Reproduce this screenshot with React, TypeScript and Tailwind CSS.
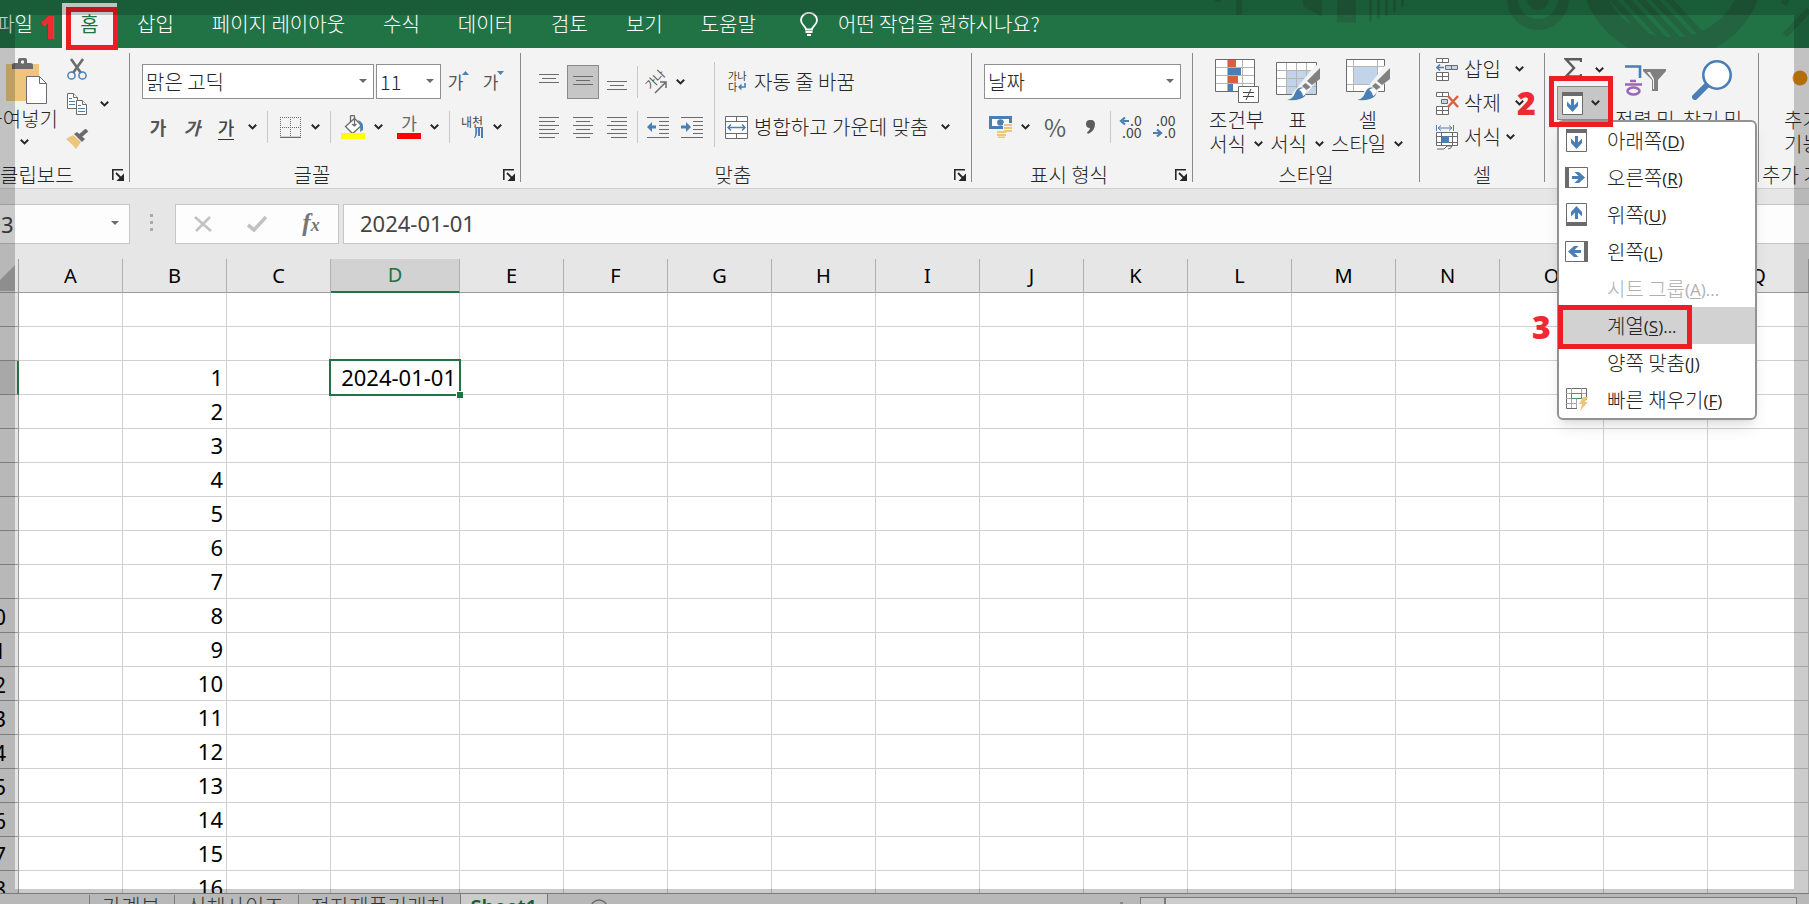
import React from 'react';

const BLUE = '#4a7fb5';
const GRAY = '#6b6b6b';

const columns = ['A', 'B', 'C', 'D', 'E', 'F', 'G', 'H', 'I', 'J', 'K', 'L', 'M', 'N', 'O', 'P', 'Q'];
const rows = Array.from({ length: 18 }, (_, i) => i + 1);
const tabs = ['삽입', '페이지 레이아웃', '수식', '데이터', '검토', '보기', '도움말'];
const sheets = ['가계부', '신체사이즈', '전자제품거래처'];

interface ChildrenProps {
  children: React.ReactNode;
}

const Chevron = () => (
  <svg className="w-[9px] h-[6px] shrink-0" viewBox="0 0 9 6" fill="none" stroke="#262626" strokeWidth="2">
    <path d="M0.8 0.8 4.5 4.4 8.2 0.8" />
  </svg>
);

const ChevronButton = ({ label }: { label: string }) => (
  <button aria-label={label} className="w-[18px] h-8 shrink-0 flex items-center justify-center">
    <Chevron />
  </button>
);

const IconButton = ({ label, className = 'w-[34px]', children }: ChildrenProps & { label: string; className?: string }) => (
  <button aria-label={label} className={`${className} h-8 shrink-0 flex items-center justify-center`}>
    {children}
  </button>
);

const Separator = ({ className = 'h-8 mx-[6px]' }: { className?: string }) => (
  <div className={`w-px shrink-0 bg-[#c8c8c8] ${className}`}></div>
);

const Divider = () => <div className="w-px h-[129px] shrink-0 bg-[#8a8a8a]"></div>;

const Launcher = ({ label }: { label: string }) => (
  <button aria-label={label} className="ml-[9px] mr-[5px] w-3 h-3 shrink-0">
    <svg viewBox="0 0 12 12" fill="none" stroke="#262626">
      <path d="M0.8 11V0.8H11" strokeWidth="1.6" />
      <path d="M4 4l5 5" strokeWidth="1.8" />
      <path d="M12 4.5V12H4.5z" fill="#262626" stroke="none" />
    </svg>
  </button>
);

interface GroupProps extends ChildrenProps {
  title: string;
  launcher?: boolean;
  className: string;
  align?: string;
}

const Group = ({ title, launcher, className, align = 'text-center', children }: GroupProps) => (
  <section className={`h-[132px] shrink-0 flex flex-col justify-between ${className}`}>
    {children}
    <div className="h-5 flex items-center">
      <span className={`flex-1 leading-5 whitespace-nowrap ${align}`}>{title}</span>
      {launcher && <Launcher label={`${title} 설정`} />}
    </div>
  </section>
);

interface ComboProps {
  label: string;
  value: string;
  className: string;
}

const Combo = ({ label, value, className }: ComboProps) => (
  <div className={`relative h-[35px] shrink-0 ${className}`}>
    <select aria-label={label} className="appearance-none w-full h-full pl-[3px] bg-white border border-[#8f8f8f] text-[#262626]">
      <option>{value}</option>
    </select>
    <svg className="absolute right-[7px] top-[15px] w-2 h-1" viewBox="0 0 8 4">
      <path d="M0 0h8L4 4z" fill={GRAY} />
    </svg>
  </div>
);

// each span is the start and end x of one horizontal line
const Lines = ({ top, gap, spans, children }: { top: number; gap: number; spans: number[][]; children?: React.ReactNode }) => (
  <svg className="w-[22px] h-[22px]" viewBox="0 0 22 22">
    {spans.map(([from, to], i) => (
      <rect key={i} x={from} y={top + i * gap} width={to - from} height="1" fill={GRAY} />
    ))}
    {children}
  </svg>
);

const HeaderArt = () => (
  <svg className="absolute right-0 top-0 w-[609px] h-12" viewBox="0 0 609 48">
    <defs>
      <clipPath id="disc">
        <circle cx="472" cy="-34" r="72" />
      </clipPath>
    </defs>
    <g fill="#23633f">
      <path d="M15 0h6v2h-6zM36 0h6v15h-6zM103 0h19v17l-19-11zM137 0h19v23l-19-1z" />
      <path d="M169 0h3v21l-3 1zM177 0h3v18l-3 1zM185 0h3v15l-3 1zM193 0h3v11l-3 2zM201 0h3v6l-3 2z" />
      <circle cx="338" cy="-1" r="11" />
    </g>
    <g fill="none" stroke="#23633f">
      <circle cx="338" cy="-1" r="25.5" strokeWidth="11" />
      <circle cx="472" cy="-34" r="82" strokeWidth="21" />
      <path d="M585 35l24-25M582 0l6 3" strokeWidth="6" />
      <g clipPath="url(#disc)" strokeWidth="6">
        <path d="M404-10l56 60M418-10l56 60M432-10l56 60M446-10l56 60M460-10l56 60" />
      </g>
    </g>
  </svg>
);

const Mark = ({ className, children }: ChildrenProps & { className: string }) => (
  <span className={`absolute z-30 text-[32px] leading-9 font-black text-[#ee2b33] font-['Open_Sans','Noto_Sans',sans-serif] ${className}`}>
    {children}
  </span>
);

const Header = () => (
  <header className="relative z-20 h-12 shrink-0 bg-[#217346] text-white">
    <HeaderArt />
    <nav className="relative flex h-12 whitespace-nowrap">
      <button className="w-[62px] pr-[29px] flex justify-end items-center">파일</button>
      <div className="relative w-[55px] mt-[3px] shrink-0 bg-[#f3f3f3]">
        <button className="w-full h-[42px] font-normal text-[#217346]">홈</button>
        <Mark className="-left-[23px] top-[6px]">1</Mark>
        <div className="absolute left-1 top-1 w-[52px] h-[43px] border-[5px] border-[#ee1c25]"></div>
      </div>
      <div className="flex pl-px">
        {tabs.map((tab) => (
          <button key={tab} className="px-[19px] h-12">
            {tab}
          </button>
        ))}
      </div>
      <button className="flex items-center gap-5 pl-[25px]">
        <svg className="w-[18px] h-6" viewBox="0 0 18 24" fill="none" stroke="#fff" strokeWidth="1.8">
          <path d="M6 17.500c0-3-5-4.500-5-9.200a8 7.500 0 0 1 16 0c0 4.700-5 6.200-5 9.200z" />
          <path d="M5.500 20h7M7 23h4" />
        </svg>
        어떤 작업을 원하시나요?
      </button>
    </nav>
  </header>
);

const ClipboardGroup = () => (
  <Group title="클립보드" launcher align="text-left" className="w-[129px]">
    <div className="flex">
      <button className="w-14 -ml-2 pt-[5px] flex flex-col items-end whitespace-nowrap">
        <svg className="w-[42px] h-[46px]" viewBox="0 0 42 46">
          <path d="M0 6h33v37H0z" fill="#edc67c" />
          <path d="M6 11V7q0-2 3-2h3V2q0-2 2-2h5q2 0 2 2v3h3q3 0 3 2v4z" fill={GRAY} />
          <circle cx="16.500" cy="4" r="1.700" fill="#f3f3f3" />
          <path d="M20.500 18.500h13l7 7v20h-20z" fill="#fff" stroke={GRAY} />
          <path d="M33.500 18.500v7h7" fill="none" stroke={GRAY} />
        </svg>
        <span className="h-6 -mr-[10px] leading-6 pt-[3px]">붙여넣기</span>
        <span className="h-6 w-12 pt-[4px] flex items-center justify-center">
          <Chevron />
        </span>
      </button>
      <div className="flex flex-col pl-[14px]">
        <IconButton label="잘라내기" className="w-[30px]">
          <svg className="w-5 h-[22px]" viewBox="0 0 20 22" fill="none">
            <path d="M4 1l10 14M16 1L6 15" stroke={GRAY} strokeWidth="2.600" />
            <circle cx="4.500" cy="17.500" r="3.600" stroke={BLUE} strokeWidth="1.500" />
            <circle cx="15.500" cy="17.500" r="3.600" stroke={BLUE} strokeWidth="1.500" />
          </svg>
        </IconButton>
        <div className="flex gap-[3px] mt-[3px]">
          <IconButton label="복사" className="w-[30px]">
            <svg className="w-[22px] h-[22px]" viewBox="0 0 22 22" fill="#fff" stroke={GRAY}>
              <path d="M1.500 0.500h6l4 4v11h-10z" />
              <path d="M7.500 0.500v4h4" />
              <path d="M3 5.500h3M3 8.500h6M3 11.500h6" stroke={BLUE} />
              <path d="M10.500 7.500h6l4 4v10h-10z" />
              <path d="M16.500 7.500v4h4" />
              <path d="M12 12.500h3M12 15.500h7M12 18.500h7" stroke={BLUE} />
            </svg>
          </IconButton>
          <ChevronButton label="복사 옵션" />
        </div>
        <IconButton label="서식 복사" className="w-[30px] mt-[3px]">
          <svg className="w-[23px] h-[20px]" viewBox="0 0 23 20">
            <path d="M0 10l7-4 8 7-5 7Q5 14 0 10z" fill="#edc67c" />
            <path d="M8 5l3-2 8 7-3 3z" fill={GRAY} />
            <path d="M14 7l7-6" stroke={GRAY} strokeWidth="4" />
          </svg>
        </IconButton>
      </div>
    </div>
  </Group>
);

const FontGroup = () => (
  <Group title="글꼴" launcher className="w-[390px]">
    <div className="pt-[11px] pl-[11px]">
      <div className="flex pl-px">
        <Combo label="글꼴" value="맑은 고딕" className="w-[232px] mr-[2px]" />
        <Combo label="글꼴 크기" value="11" className="w-[65px]" />
        <button aria-label="글꼴 크기 크게" className="w-[35px] flex items-center justify-center text-[17px] font-normal text-[#555]">
          가
          <svg className="w-[7px] h-[22px] -ml-[1px]" viewBox="0 0 7 22">
            <path d="M0 4h7L3.500 0z" fill={BLUE} />
          </svg>
        </button>
        <button aria-label="글꼴 크기 작게" className="w-[35px] flex items-center justify-center text-[17px] font-normal text-[#555]">
          가
          <svg className="w-[7px] h-[22px] -ml-[1px]" viewBox="0 0 7 22">
            <path d="M0 0h7L3.500 4z" fill={BLUE} />
          </svg>
        </button>
      </div>
      <div className="flex mt-3">
        <IconButton label="굵게">
          <b className="text-lg font-bold text-[#555]">가</b>
        </IconButton>
        <IconButton label="기울임꼴">
          <i className="text-lg font-bold text-[#555]">가</i>
        </IconButton>
        <IconButton label="밑줄">
          <span className="text-lg leading-6 border-b border-[#333] font-medium text-[#444]">가</span>
        </IconButton>
        <ChevronButton label="밑줄 옵션" />
        <Separator />
        <IconButton label="테두리" className="w-8">
          <svg className="w-[21px] h-[21px]" viewBox="0 0 21 21" fill="none" stroke={GRAY}>
            <path d="M0 0.500h21M0 10.500h21M0.500 0v20M10.500 0v20M20.500 0v20" strokeDasharray="1 1" />
            <path d="M0 20.500h21" strokeWidth="1.500" />
          </svg>
        </IconButton>
        <ChevronButton label="테두리 옵션" />
        <Separator />
        <IconButton label="채우기 색" className="w-8">
          <svg className="w-6 h-6" viewBox="0 0 24 24">
            <path d="M4.500 11.500l9-8 7 7-9 8z" fill="#fff" stroke={GRAY} strokeWidth="1.300" />
            <path d="M9.500 7V1.500q0-1 1-1h2q1 0 1 1V10M11 9l2.500 2 2-2" fill="none" stroke={GRAY} strokeWidth="1.300" />
            <path d="M17 5q6 2 5 10l-3 2q1-6-2-12z" fill={BLUE} />
            <rect y="18" width="24" height="6" fill="#ff0" />
          </svg>
        </IconButton>
        <ChevronButton label="채우기 색 옵션" />
        <IconButton label="글꼴 색" className="w-8 ml-[6px]">
          <span className="w-6 h-6 border-b-[6px] border-[#f00] text-[17px] leading-[16px] font-normal text-[#666]">가</span>
        </IconButton>
        <ChevronButton label="글꼴 색 옵션" />
        <Separator />
        <IconButton label="윗주" className="w-8">
          <span className="w-[22px] h-[22px] flex flex-col items-end text-xs leading-[11px] font-normal text-[#444] whitespace-nowrap">
            내천
            <svg className="w-[9px] h-[11px]" viewBox="0 0 9 11">
              <path d="M0 11q2-3 1-11h2q1 8-2 11zM4 0h2v9H4zM7 0h2v11H7z" fill={BLUE} />
            </svg>
          </span>
        </IconButton>
        <ChevronButton label="윗주 옵션" />
      </div>
    </div>
  </Group>
);

const AlignGroup = () => (
  <Group title="맞춤" launcher className="w-[450px]">
    <div className="flex">
      <div className="pt-[11px] pl-[11px] w-[188px]">
        <div className="flex items-center h-[35px]">
          <IconButton label="위쪽 맞춤">
            <Lines top={3} gap={4} spans={[[1, 21], [4, 18], [1, 21]]} />
          </IconButton>
          <button aria-label="가운데 맞춤" className="w-8 h-[34px] mx-px shrink-0 flex items-center justify-center bg-[#c6c6c6] border border-[#8a8a8a]">
            <Lines top={5} gap={4} spans={[[1, 21], [4, 18], [1, 21]]} />
          </button>
          <IconButton label="아래쪽 맞춤">
            <Lines top={10} gap={4} spans={[[1, 21], [4, 18], [1, 21]]} />
          </IconButton>
          <Separator className="h-8 mx-[3px]" />
          <IconButton label="방향" className="w-[30px]">
            <span className="relative w-6 h-6">
              <span className="absolute left-0 top-1 w-5 text-[12px] leading-3 font-normal text-[#555] whitespace-nowrap -rotate-45">가나</span>
              <svg className="absolute inset-0 w-6 h-6" viewBox="0 0 24 24" fill="none" stroke={GRAY} strokeWidth="1.500">
                <path d="M11 23L22 12M16 12h6v6" />
              </svg>
            </span>
          </IconButton>
          <ChevronButton label="방향 옵션" />
        </div>
        <div className="flex mt-3">
          <IconButton label="왼쪽 맞춤">
            <Lines top={1} gap={4} spans={[[1, 21], [1, 17], [1, 21], [1, 17], [1, 21], [1, 17]]} />
          </IconButton>
          <IconButton label="가로 가운데 맞춤">
            <Lines top={1} gap={4} spans={[[1, 21], [4, 18], [1, 21], [4, 18], [1, 21], [4, 18]]} />
          </IconButton>
          <IconButton label="오른쪽 맞춤">
            <Lines top={1} gap={4} spans={[[1, 21], [5, 21], [1, 21], [5, 21], [1, 21], [5, 21]]} />
          </IconButton>
          <Separator className="h-8 mx-[3px]" />
          <IconButton label="내어쓰기">
            <Lines top={1} gap={4} spans={[[0, 22], [12, 22], [12, 22], [12, 22], [12, 22], [0, 22]]}>
              <path d="M0 11l5-5v3.500h4v3H5V16z" fill={BLUE} />
            </Lines>
          </IconButton>
          <IconButton label="들여쓰기">
            <Lines top={1} gap={4} spans={[[0, 22], [12, 22], [12, 22], [12, 22], [12, 22], [0, 22]]}>
              <path d="M10 11L5 6v3.500H0v3h5V16z" fill={BLUE} />
            </Lines>
          </IconButton>
        </div>
      </div>
      <Separator className="h-[85px] mt-[9px] ml-[5px] mr-[10px]" />
      <div className="pt-[11px] whitespace-nowrap">
        <button className="h-[35px] flex items-center gap-[6px]">
          <svg className="w-[23px] h-[21px] font-normal" viewBox="0 0 23 21">
            <text x="3" y="9" fontSize="10" fill="#333">가나</text>
            <text x="3" y="20" fontSize="10" fill="#333">다</text>
            <path d="M20 12v4h-4" fill="none" stroke={BLUE} strokeWidth="1.600" />
            <path d="M13 16l3.500-3.500v7z" fill={BLUE} />
          </svg>
          자동 줄 바꿈
        </button>
        <div className="flex mt-3">
          <button className="h-8 flex items-center gap-[6px]">
            <svg className="w-[23px] h-[23px]" viewBox="0 0 23 23" fill="#fff" stroke={GRAY}>
              <path d="M0.500 0.500h22v22h-22zM0.500 5.500h22M0.500 17.500h22M11.500 0.500v5M11.500 17.500v5" />
              <path d="M3 11.500h17M6 8.500l-3 3 3 3M17 8.500l3 3-3 3" stroke={BLUE} strokeWidth="1.500" />
            </svg>
            병합하고 가운데 맞춤
          </button>
          <div className="pl-2 flex">
            <ChevronButton label="병합 옵션" />
          </div>
        </div>
      </div>
    </div>
  </Group>
);

const NumberGroup = () => (
  <Group title="표시 형식" launcher className="w-[220px]">
    <div className="pt-[11px] pl-3">
      <Combo label="표시 형식" value="날짜" className="w-[197px]" />
      <div className="flex mt-3">
        <IconButton label="회계 표시 형식" className="w-8">
          <svg className="w-[23px] h-[22px]" viewBox="0 0 23 22">
            <path d="M0 0h23v13H0z" fill={BLUE} />
            <path d="M3 3h17v7H3z" fill="#fff" />
            <circle cx="11.500" cy="6.500" r="3.300" fill={BLUE} />
            <path d="M14 7h9v11h-5v4H8v-7h6z" fill="#f3f3f3" />
            <path d="M15 9h8M15 12h8M15 15h8M8 16h9M8 19h9M9 21.500h7" stroke="#edc67c" strokeWidth="2" />
          </svg>
        </IconButton>
        <ChevronButton label="회계 옵션" />
        <IconButton label="백분율" className="w-[42px]">
          <span className="text-2xl font-normal text-[#5c5c5c]">%</span>
        </IconButton>
        <IconButton label="쉼표" className="w-7">
          <svg className="w-[10px] h-[14px]" viewBox="0 0 10 14">
            <path d="M5 0a4 4 0 0 1 5 4q0 7-7 10l-1-1.500q3-2 3-4.500A4 4 0 0 1 5 0z" fill="#5c5c5c" />
          </svg>
        </IconButton>
        <Separator className="h-8 ml-[6px] mr-[3px]" />
        <IconButton label="자릿수 늘림">
          <svg className="w-6 h-[22px] font-normal" viewBox="0 0 24 22">
            <path d="M10 5H4M6 1.500L2 5l4 3.500" fill="none" stroke={BLUE} strokeWidth="2.200" />
            <text x="11" y="10" fontSize="14" fill="#444">.0</text>
            <text x="3" y="22" fontSize="14" fill="#444">.00</text>
          </svg>
        </IconButton>
        <IconButton label="자릿수 줄임">
          <svg className="w-6 h-[22px] font-normal" viewBox="0 0 24 22">
            <text x="3" y="10" fontSize="14" fill="#444">.00</text>
            <text x="11" y="22" fontSize="14" fill="#444">.0</text>
            <path d="M0 17h7M4 13.500L8 17l-4 3.500" fill="none" stroke={BLUE} strokeWidth="2.200" />
          </svg>
        </IconButton>
      </div>
    </div>
  </Group>
);

const Brush = () => (
  <g>
    <path d="M20 40L44 10" stroke="#f3f3f3" strokeWidth="11" />
    <path d="M44 10v11l-8 6-5-4z" fill="#808080" />
    <path d="M29.500 25l5 4-4 3-4.500-4z" fill="#808080" />
    <path d="M11 42q6-1 8-7 3-7 9-5 4 3 1 8-4 5-18 4z" fill={BLUE} />
    <path d="M23 32q5-4 7 0 1 4-3 6-1-5-4-6z" fill="#fff" />
  </g>
);

interface BigButtonProps extends ChildrenProps {
  first: string;
  second: string;
}

const BigButton = ({ first, second, children }: BigButtonProps) => (
  <button className="flex flex-col items-center pt-[5px] whitespace-nowrap">
    <svg className="w-[44px] h-[46px] mb-1" viewBox="0 0 44 46" fill="none">
      {children}
    </svg>
    <span className="leading-6">{first}</span>
    <span className="leading-6 flex items-center">
      {second}
      <span className="w-[18px] flex justify-end pr-px">
        <Chevron />
      </span>
    </span>
  </button>
);

const StyleGroup = () => (
  <Group title="스타일" className="w-[226px]">
    <div className="flex gap-[6px] pl-4">
      <BigButton first="조건부" second="서식">
        <path d="M0.500 1.500h39v32h-39z" fill="#fff" />
        <path d="M0 9.500h40M0 17.500h40M0 25.500h40M12.500 1v33M27.500 1v33" stroke="#b5b5b5" />
        <path d="M13 2h8v7h-8zM13 18h10v7H13z" fill="#d9603f" />
        <path d="M13 10h13v7H13zM13 26h5v7h-5z" fill={BLUE} />
        <path d="M0.500 1.500h39v32h-39z" stroke={GRAY} />
        <path d="M23.500 28.500h20v16h-20z" fill="#fff" stroke={GRAY} />
        <path d="M28 34.500h11M28 38.500h11M36 31l-5 11" stroke="#444" />
      </BigButton>
      <BigButton first="표" second="서식">
        <path d="M0.500 4.500h40v32h-40z" fill="#fff" />
        <path d="M10 12h31v24H10z" fill="#c2d4ea" />
        <path d="M0 12.500h40M0 20.500h40M0 28.500h40M10.500 4v32M20.500 4v32M30.500 4v32" stroke="#b5b5b5" />
        <path d="M0.500 4.500h40v32h-40z" stroke={GRAY} />
        <Brush />
      </BigButton>
      <BigButton first="셀" second="스타일">
        <path d="M0.500 1.500h38v32h-38z" fill="#fff" />
        <path d="M8 9h23v17H8z" fill="#c2d4ea" />
        <path d="M0 8.500h38M0 26.500h38M7.500 1v32M31.500 1v32" stroke="#b5b5b5" />
        <path d="M0.500 1.500h38v32h-38z" stroke={GRAY} />
        <Brush />
      </BigButton>
    </div>
  </Group>
);

const CellGroup = () => (
  <Group title="셀" className="w-[124px]">
    <div className="pl-4 -mt-px whitespace-nowrap">
      <button className="h-[34px] flex items-center gap-[5px]">
        <svg className="w-[23px] h-[23px]" viewBox="0 0 23 23" fill="#fff" stroke={GRAY}>
          <path d="M0.500 0.500h12v4h-12zM6.500 0.500v4M0.500 14.500h12v8h-12zM6.500 14.500v8M0.500 18.500h12" />
          <path d="M9.500 7.500h12v4h-12z" fill="#c2d4ea" />
          <path d="M15.500 7.500v4" />
          <path d="M8 9.500H1M4 6.500l-3 3 3 3" stroke={BLUE} strokeWidth="1.600" fill="none" />
        </svg>
        삽입
        <span className="pl-[9px]"><Chevron /></span>
      </button>
      <button className="h-[34px] flex items-center gap-[5px]">
        <svg className="w-[23px] h-[23px]" viewBox="0 0 23 23" fill="#fff" stroke={GRAY}>
          <path d="M0.500 0.500h12v4h-12zM6.500 0.500v4M0.500 14.500h12v8h-12zM6.500 14.500v8M0.500 18.500h12" />
          <path d="M5.500 7.500h6v4h-6z" fill="#c2d4ea" />
          <path d="M12 4l10 11M22 4L12 15" stroke="#d9603f" strokeWidth="2.400" />
        </svg>
        삭제
        <span className="pl-[9px]"><Chevron /></span>
      </button>
      <button className="h-[34px] flex items-center gap-[5px]">
        <svg className="w-[23px] h-[25px]" viewBox="0 0 23 25" fill="#fff" stroke={GRAY}>
          <path d="M0.500 0v6M17.500 0v6M2 3h14M5 0.500L2 3l3 2.500M13 0.500L16 3l-3 2.500" stroke={BLUE} fill="none" />
          <path d="M0.500 7.500h21v13h-21zM5.500 7.500v13M16.500 7.500v13M0.500 11.500h21M0.500 17.500h21" />
          <path d="M1 24h7l3-3h5q-1 3-4 3" fill="none" />
          <path d="M6 11h7v7H6z" fill={BLUE} stroke="none" />
        </svg>
        서식
        <Chevron />
      </button>
    </div>
  </Group>
);

// arrow in a sheet whose thick edge shows where the fill starts; drawn pointing down
const FillIcon = ({ turn = 0 }: { turn?: number }) => (
  <svg className="w-[23px] h-[23px] shrink-0" viewBox="0 0 23 23">
    <g transform={`rotate(${turn} 11.5 11.5)`}>
      <path d="M1.500 0.500h20v22h-20z" fill="#fff" stroke={GRAY} />
      <path d="M1 0h21v4H1z" fill={GRAY} />
      <path d="M10 7h3v6.500l4-4v4.500L11.500 20 6 14V9.500l4 4z" fill={BLUE} />
    </g>
  </svg>
);

const QuickFillIcon = () => (
  <svg className="w-[23px] h-[23px] shrink-0" viewBox="0 0 23 23" fill="none">
    <path d="M1.500 0.500h20v20h-20z" fill="#fff" stroke={GRAY} />
    <path d="M1 5.500h20M1 10.500h20M1 15.500h14M6.500 0v20M16.500 0v10M11.500 10v10" stroke="#a8a8a8" />
    <path d="M6.500 5.500h10v5h-10z" fill="#fff" stroke="#439467" />
    <path d="M12 12h11v11H12z" fill="#fff" />
    <path d="M18 9h5l-3 5h3l-8 9 2-7h-3z" fill="#edc67c" />
  </svg>
);

const menuItems = [
  { text: '아래쪽', hotkey: 'D', icon: <FillIcon /> },
  { text: '오른쪽', hotkey: 'R', icon: <FillIcon turn={-90} /> },
  { text: '위쪽', hotkey: 'U', icon: <FillIcon turn={180} /> },
  { text: '왼쪽', hotkey: 'L', icon: <FillIcon turn={90} /> },
  { text: '시트 그룹', hotkey: 'A', more: true, disabled: true },
  { text: '계열', hotkey: 'S', more: true, active: true },
  { text: '양쪽 맞춤', hotkey: 'J' },
  { text: '빠른 채우기', hotkey: 'F', icon: <QuickFillIcon /> },
];

const FillMenu = () => (
  <div className="absolute left-0 top-[34px] z-20 w-[200px] bg-white border-2 border-[#939393] rounded-md shadow-lg">
    {menuItems.map((item) => (
      <div key={item.text} className="relative">
        <button
          disabled={item.disabled}
          className={`w-full h-[37px] pl-[6px] flex items-center text-left whitespace-nowrap disabled:text-[#b0b0b0] ${item.active ? 'bg-[#d2d2d2]' : ''}`}
        >
          <span className="w-[42px] shrink-0">{item.icon}</span>
          {item.text}
          <span className="pt-[2px] text-[17px] font-normal font-['Open_Sans','Noto_Sans',sans-serif]">
            (<u className="underline-offset-2">{item.hotkey}</u>){item.more && '...'}
          </span>
        </button>
        {item.active && (
          <>
            <Mark className="-left-[27px] top-[2px]">3</Mark>
            <div className="absolute -left-px -top-[2px] w-[134px] h-11 border-[5px] border-[#ee1c25]"></div>
          </>
        )}
      </div>
    ))}
  </div>
);

const EditGroup = () => (
  <Group title="편집" className="w-[213px]">
    <div className="flex">
      <div className="pl-3 w-[70px] shrink-0">
        <button aria-label="합계" className="h-[33px] pl-[7px] flex items-center">
          <svg className="w-[18px] h-5 -mt-[3px]" viewBox="0 0 18 20" fill="none">
            <path d="M17 4V1.300H2L10 10 2 18.500H17V16" stroke="#5c5c5c" strokeWidth="2.400" />
          </svg>
          <span className="pl-[13px]"><Chevron /></span>
        </button>
        <div className="relative w-[52px]">
          <button aria-label="채우기" className="w-full h-[34px] pl-[3px] flex items-center gap-[7px] bg-[#c6c6c6] border border-[#8a8a8a]">
            <FillIcon />
            <Chevron />
          </button>
          <Mark className="-left-[40px] -top-[1px]">2</Mark>
          <FillMenu />
          <div className="absolute z-30 -left-2 -top-[10px] w-16 h-[51px] border-[5px] border-[#ee1c25]"></div>
        </div>
      </div>
      <button className="pt-3 flex flex-col items-center whitespace-nowrap">
        <svg className="w-[42px] h-8 mb-[11px]" viewBox="0 0 42 32" fill="none">
          <path d="M1 1.500h15V13" stroke={BLUE} strokeWidth="2.600" />
          <path d="M6 16h6M1 19.500h17" stroke="#9a66b8" strokeWidth="2.600" />
          <ellipse cx="9.500" cy="26" rx="6" ry="3.500" stroke="#9a66b8" strokeWidth="2.600" />
          <path d="M19 4h23v2l-8 9v11h-6V15l-9-9z" fill="#808080" />
          <path d="M29 15l-6-8h3l4 7v10h-1z" fill="#f3f3f3" />
        </svg>
        <span className="leading-6">정렬 및</span>
        <span className="leading-6">필터</span>
      </button>
      <button className="pt-[7px] pl-2 flex flex-col items-center whitespace-nowrap">
        <svg className="w-10 h-10 mb-2" viewBox="0 0 40 40" fill="none">
          <path d="M3 37l14-14" stroke={BLUE} strokeWidth="6" strokeLinecap="round" />
          <circle cx="25" cy="15" r="13.700" fill="#fff" stroke={BLUE} strokeWidth="2.600" />
        </svg>
        <span className="leading-6">찾기 및</span>
        <span className="leading-6">선택</span>
      </button>
    </div>
  </Group>
);

const Ribbon = () => (
  <div className="h-[141px] pt-[5px] shrink-0 flex items-start bg-[#f3f3f3] border-b border-[#d0d0d0]">
    <ClipboardGroup />
    <Divider />
    <FontGroup />
    <Divider />
    <AlignGroup />
    <Divider />
    <NumberGroup />
    <Divider />
    <StyleGroup />
    <Divider />
    <CellGroup />
    <Divider />
    <EditGroup />
    <Divider />
    <section className="h-[132px] flex-1 min-w-0 overflow-hidden flex flex-col justify-between whitespace-nowrap">
      <button className="pl-[25px] pt-[17px] text-left">
        <svg className="w-4 h-4 ml-2 mb-[22px]" viewBox="0 0 16 16">
          <circle cx="8" cy="8" r="7.500" fill="#e08a10" />
        </svg>
        <span className="block leading-6">추가</span>
        <span className="block leading-6">기능</span>
      </button>
      <span className="pl-[3px] leading-5">추가 기능</span>
    </section>
  </div>
);

const FormulaBar = () => (
  <div className="h-[70px] shrink-0 flex items-start pt-[15px] bg-[#e6e6e6] text-[22px] font-normal text-[#444]">
    <div className="relative w-[146px] h-10 -ml-4 shrink-0">
      <input aria-label="이름 상자" defaultValue="D3" className="w-full h-full bg-[#fdfdfd] border border-[#c6c6c6] font-['Noto_Sans',sans-serif]" />
      <svg className="absolute right-[11px] top-[17px] w-2 h-1" viewBox="0 0 8 4">
        <path d="M0 0h8L4 4z" fill={GRAY} />
      </svg>
    </div>
    <div className="w-[45px] h-9 pr-[2px] flex flex-col items-center justify-center gap-1">
      <div className="w-[3px] h-[3px] bg-[#aaa]"></div>
      <div className="w-[3px] h-[3px] bg-[#aaa]"></div>
      <div className="w-[3px] h-[3px] bg-[#aaa]"></div>
    </div>
    <div className="w-[164px] h-10 shrink-0 flex bg-[#fdfdfd] border border-[#c6c6c6]">
      <button aria-label="취소" className="flex-1 flex items-center justify-center">
        <svg className="w-[18px] h-4" viewBox="0 0 18 16" stroke="#c2c2c2" strokeWidth="2.600">
          <path d="M1 1l16 14M16 1L2 15" />
        </svg>
      </button>
      <button aria-label="입력" className="flex-1 flex items-center justify-center">
        <svg className="w-5 h-4" viewBox="0 0 20 16" fill="none" stroke="#c2c2c2" strokeWidth="3.600">
          <path d="M1 9l6 5L19 1" />
        </svg>
      </button>
      <button aria-label="함수 삽입" className="flex-1 text-[25px] leading-8 italic font-bold text-[#777] font-['Liberation_Serif',serif]">
        f<span className="text-[18px]">x</span>
      </button>
    </div>
    <input
      aria-label="수식 입력줄"
      defaultValue="2024-01-01"
      className="flex-1 min-w-0 h-10 ml-1 pl-4 pb-[2px] bg-[#fdfdfd] border border-r-0 border-[#c6c6c6] font-['Noto_Sans',sans-serif]"
    />
  </div>
);

const Sheet = () => (
  <div className="flex-1 min-h-0 -ml-[31px] overflow-hidden bg-white">
    <table className="w-full table-fixed border-separate border-spacing-0 text-[22px] leading-6 font-normal text-black font-['Noto_Sans',sans-serif]">
      <colgroup>
        <col className="w-[50px]" />
        {columns.map((col) => (
          <col key={col} className={col === 'D' ? 'w-[129px]' : col === 'Q' ? '' : 'w-[104px]'} />
        ))}
      </colgroup>
      <thead>
        <tr className="h-[34px] text-xl leading-6">
          <th aria-label="모두 선택" className="p-0 bg-[#e6e6e6] border-r border-b border-[#9b9b9b]">
            <svg className="w-[26px] h-[26px] ml-5 mt-1" viewBox="0 0 26 26">
              <path d="M26 0v26H0z" fill="#b2b2b2" />
            </svg>
          </th>
          {columns.map((col) => (
            <th
              key={col}
              className={`p-0 font-normal border-r border-r-[#b0b0b0] ${
                col === 'D' ? 'bg-[#d2d2d2] text-[#217346] border-b-2 border-b-[#217346]' : 'bg-[#e6e6e6] border-b border-b-[#9b9b9b]'
              }`}
            >
              {col}
            </th>
          ))}
        </tr>
      </thead>
      <tbody>
        {rows.map((row) => (
          <tr key={row} className="h-[34px]">
            <th
              className={`p-0 font-normal border-b border-b-[#9b9b9b] ${
                row === 3 ? 'bg-[#d2d2d2] border-r-2 border-r-[#217346]' : 'bg-[#e6e6e6] border-r border-r-[#9b9b9b]'
              }`}
            >
              {row}
            </th>
            {columns.map((col) => (
              <td key={col} className="relative p-0 pr-[3px] pb-[2px] text-right border-r border-b border-[#d0d0d0]">
                {col === 'B' && row > 2 && row - 2}
                {col === 'D' && row === 3 && (
                  <>
                    2024-01-01
                    <div className="absolute z-10 -left-[2px] -top-[2px] -right-[2px] -bottom-[2px] border-2 border-[#217346]"></div>
                    <div className="absolute z-10 -right-1 -bottom-1 w-[7px] h-[7px] bg-[#217346] border-t border-l border-white"></div>
                  </>
                )}
              </td>
            ))}
          </tr>
        ))}
      </tbody>
    </table>
  </div>
);

const SheetTabs = () => (
  <footer className="h-[11px] shrink-0 overflow-hidden flex items-start bg-[#e6e6e6] border-t border-[#999] text-[#444] whitespace-nowrap">
    <div className="w-[89px] shrink-0"></div>
    {sheets.map((name) => (
      <button key={name} className="h-5 mt-px pl-3 pr-[14px] text-[21px] leading-5 border-l border-[#999]">
        {name}
      </button>
    ))}
    <button className="w-[88px] h-[26px] -mt-px pt-[2px] leading-6 bg-white border-x border-[#999] font-semibold text-[#217346] font-['Noto_Sans',sans-serif]">
      Sheet1
    </button>
    <button aria-label="새 시트" className="ml-[42px] mt-[5px]">
      <svg className="w-[18px] h-[18px]" viewBox="0 0 18 18" fill="none" stroke="#888" strokeWidth="1.500">
        <circle cx="9" cy="9" r="8" />
        <path d="M9 5v8M5 9h8" />
      </svg>
    </button>
    <div className="flex-1"></div>
    <div className="w-[3px] h-5 mt-2 mr-[17px] bg-[#aaa]"></div>
    <div className="w-[657px] h-6 mt-[3px] mr-3 border border-[#999] bg-white">
      <div className="w-[25px] h-full border-r-2 border-[#999] bg-[#f8f8f8]"></div>
    </div>
  </footer>
);

const App: React.FC = () => {
  return (
    <div className="relative h-screen flex flex-col overflow-hidden bg-[#e6e6e6] text-xl font-light text-[#262626] font-['Noto_Sans_CJK_KR',sans-serif]">
      <Header />
      <Ribbon />
      <FormulaBar />
      <Sheet />
      <SheetTabs />
      <div className="absolute inset-0 z-40 pointer-events-none border-[15px] border-black/20"></div>
    </div>
  );
};

export default App;
